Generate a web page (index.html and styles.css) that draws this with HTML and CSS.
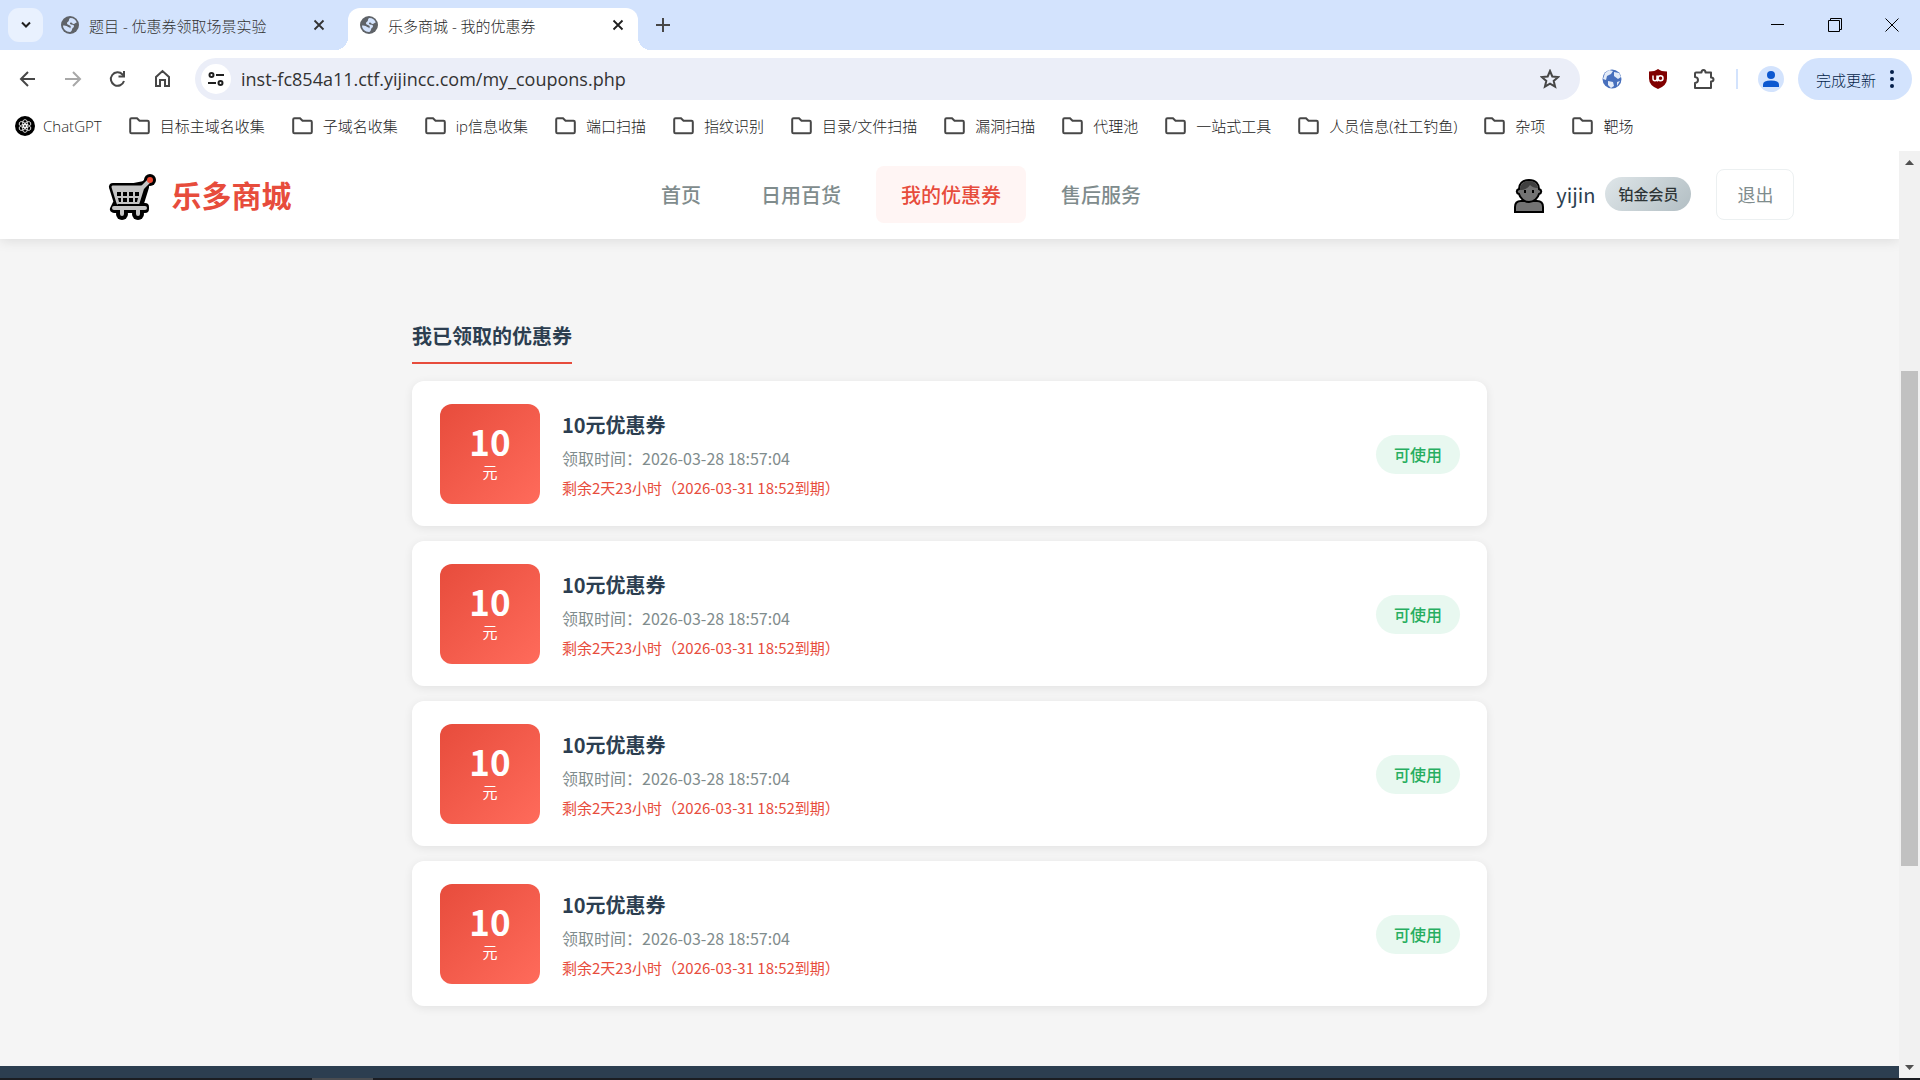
FILE: index.html
```html
<!DOCTYPE html>
<html lang="zh-CN">
<head>
    <meta charset="UTF-8">
    <meta name="viewport" content="width=device-width, initial-scale=1.0">
    <title>乐多商城 - 我的优惠券</title>
    <link rel="stylesheet" href="styles.css">
</head>
<body>

    <!-- Shared icons -->
    <svg class="sprite" aria-hidden="true">
        <symbol id="globe" viewBox="0 0 18 18">
            <circle cx="9" cy="9" r="9" fill="#5f6368"/>
            <path d="M9.500 2c3 0 5.500 2 6.300 4.500-1.300 0-1.800 1.500-3.300 1.500-1.500 0-1-1.500-2.500-1.500S8.500 8 10 8.500c1.500.3 3 0 3 1.800 0 1.700-2 1.500-2 3.200 0 1-1 2.300-2 2.500C5 16 2 13 2 9.500c1.500 0 3.500 0 4.500 1 .7 1 2.500.3 2.500 2 .8-.8 1-2 .3-2.700C8.500 9 6 9 6 7c0-1 2-1.500 2-3 0-1 .5-2 1.500-2z" fill="#d3e3fd"/>
        </symbol>
        <symbol id="close" viewBox="0 0 12 12">
            <path d="M1.500 1.500l9 9M10.500 1.500l-9 9" stroke="currentColor" stroke-width="1.800" fill="none"/>
        </symbol>
        <symbol id="folder" viewBox="0 0 21 18">
            <path d="M1.200 2.500Q1.200 1.200 2.500 1.200H8l2.500 2.600h8q1.300 0 1.300 1.300v9.900q0 1.300-1.300 1.300h-16q-1.300 0-1.300-1.300z" fill="none" stroke="#474747" stroke-width="2"/>
        </symbol>
    </svg>

    <!-- Tab Strip -->
    <div class="tab-strip">
        <button class="tab-search" aria-label="搜索标签页">
            <svg width="10" height="8" viewBox="0 0 10 8"><path d="M1 1.500l4 4 4-4" fill="none" stroke="#1f1f1f" stroke-width="2"/></svg>
        </button>
        <div class="tab">
            <svg class="favicon"><use href="#globe"/></svg>
            <span class="tab-title">题目 - 优惠券领取场景实验</span>
            <button class="tab-close" aria-label="关闭"><svg><use href="#close"/></svg></button>
        </div>
        <div class="tab active">
            <svg class="favicon"><use href="#globe"/></svg>
            <span class="tab-title">乐多商城 - 我的优惠券</span>
            <button class="tab-close" aria-label="关闭"><svg><use href="#close"/></svg></button>
        </div>
        <button class="new-tab" aria-label="打开新的标签页">
            <svg width="14" height="14" viewBox="0 0 14 14"><path d="M7 0v14M0 7h14" stroke="#474747" stroke-width="2"/></svg>
        </button>
        <div class="window-buttons">
            <button aria-label="最小化"><svg width="14" height="14" viewBox="0 0 14 14"><path d="M0 6.500h13" stroke="#000"/></svg></button>
            <button aria-label="还原"><svg width="14" height="14" viewBox="0 0 14 14"><path d="M.5 2.500h11v11H.5zM2.500 2V.5h11v11H12" fill="none" stroke="#000"/></svg></button>
            <button aria-label="关闭窗口"><svg width="14" height="14" viewBox="0 0 14 14"><path d="M.5.5l13 13M13.500.5l-13 13" stroke="#000"/></svg></button>
        </div>
    </div>

    <!-- Toolbar -->
    <div class="toolbar">
        <div class="nav-icons">
            <button aria-label="后退"><svg width="20" height="20" viewBox="0 0 20 20"><path d="M17 10H3.500M10 3l-7 7 7 7" fill="none" stroke="#474747" stroke-width="2"/></svg></button>
            <button aria-label="前进"><svg width="20" height="20" viewBox="0 0 20 20"><path d="M2 10h14.500M10 3l7 7-7 7" fill="none" stroke="#a8a8a8" stroke-width="2"/></svg></button>
            <button aria-label="重新加载"><svg width="20" height="20" viewBox="0 0 20 20"><path d="M16 12A6.700 6.700 0 1 1 14.500 5.500L16 7" fill="none" stroke="#474747" stroke-width="2"/><path d="M17 2v6.500h-6.500v-2H15V2z" fill="#474747"/></svg></button>
            <button aria-label="主页"><svg width="20" height="20" viewBox="0 0 20 20"><path d="M3 17V8l6.500-6L16 8v9h-4v-6H7v6z" fill="none" stroke="#474747" stroke-width="2"/></svg></button>
        </div>
        <div class="address-bar">
            <button class="site-info" aria-label="查看网站信息">
                <svg width="16" height="14" viewBox="0 0 16 14"><g fill="none" stroke="#1f1f1f" stroke-width="2"><circle cx="3.500" cy="3" r="2"/><path d="M8 3h8M0 11h8"/><circle cx="12.500" cy="11" r="2"/></g></svg>
            </button>
            <input class="url" type="text" aria-label="地址" value="inst-fc854a11.ctf.yijincc.com/my_coupons.php">
            <button class="star" aria-label="添加书签">
                <svg width="20" height="20" viewBox="0 0 20 20"><path d="M10 2l2.300 5.500 6 .5-4.600 3.900 1.400 5.800L10 14.600l-5.100 3.100 1.400-5.800L1.700 8l6-.5z" fill="none" stroke="#474747" stroke-width="2"/></svg>
            </button>
        </div>
        <div class="extensions">
            <button aria-label="代理扩展">
                <svg width="20" height="20" viewBox="0 0 20 20"><circle cx="10" cy="10" r="9.500" fill="#4870bd"/><path d="M3 4l4-3 4 1-2 3-4 2-1 4-3-1zM12 3l5 1 2 4-3 2-4-3zM6 12l5 1 1 4-3 2-3-3zM15 13l3-1-3 5z" fill="#e3ebf8"/></svg>
            </button>
            <button aria-label="uBlock Origin">
                <svg width="20" height="20" viewBox="0 0 20 20"><path d="M10 0q3 2.500 9 2.500v7q0 7-9 10.500-9-3.500-9-10.500v-7Q7 2.500 10 0z" fill="#800000"/><path d="M5 6.500v3.200q0 2 2 2t2-2V6.500M9.500 6.500v6" fill="none" stroke="#fff" stroke-width="1.500"/><circle cx="12.500" cy="9.200" r="2.500" fill="none" stroke="#fff" stroke-width="1.500"/></svg>
            </button>
            <button aria-label="扩展程序">
                <svg width="22" height="22" viewBox="0 0 22 22"><path d="M3 4.500h5.500q0-2.500 2-2.500t2 2.500H18v5q2.500 0 2.500 2t-2.500 2V20H2v-5q3-.3 3-3t-3-3V5.500q0-1 1-1z" fill="none" stroke="#474747" stroke-width="2" stroke-linejoin="round"/></svg>
            </button>
        </div>
        <span class="divider"></span>
        <button class="profile" aria-label="个人资料">
            <svg width="16" height="16" viewBox="0 0 16 16" fill="#0b57d0"><circle cx="8" cy="4" r="4"/><path d="M0 16v-2.500q0-4 8-4t8 4V16z"/></svg>
        </button>
        <button class="update">
            <span>完成更新</span>
            <svg width="4" height="18" viewBox="0 0 4 18" fill="#041e49"><circle cx="2" cy="2" r="2"/><circle cx="2" cy="9" r="2"/><circle cx="2" cy="16" r="2"/></svg>
        </button>
    </div>

    <!-- Bookmarks -->
    <div class="bookmarks">
        <a href="#" class="chatgpt"><svg viewBox="0 0 20 20"><circle cx="10" cy="10" r="10" fill="#000"/><g fill="none" stroke="#fff" stroke-width=".8"><ellipse cx="10" cy="7.500" rx="2.500" ry="4"/><ellipse cx="10" cy="7.500" rx="2.500" ry="4" transform="rotate(60 10 10)"/><ellipse cx="10" cy="7.500" rx="2.500" ry="4" transform="rotate(120 10 10)"/><ellipse cx="10" cy="7.500" rx="2.500" ry="4" transform="rotate(180 10 10)"/><ellipse cx="10" cy="7.500" rx="2.500" ry="4" transform="rotate(240 10 10)"/><ellipse cx="10" cy="7.500" rx="2.500" ry="4" transform="rotate(300 10 10)"/></g></svg>ChatGPT</a>
        <a href="#"><svg><use href="#folder"/></svg>目标主域名收集</a>
        <a href="#"><svg><use href="#folder"/></svg>子域名收集</a>
        <a href="#"><svg><use href="#folder"/></svg>ip信息收集</a>
        <a href="#"><svg><use href="#folder"/></svg>端口扫描</a>
        <a href="#"><svg><use href="#folder"/></svg>指纹识别</a>
        <a href="#"><svg><use href="#folder"/></svg>目录/文件扫描</a>
        <a href="#"><svg><use href="#folder"/></svg>漏洞扫描</a>
        <a href="#"><svg><use href="#folder"/></svg>代理池</a>
        <a href="#"><svg><use href="#folder"/></svg>一站式工具</a>
        <a href="#"><svg><use href="#folder"/></svg>人员信息(社工钓鱼)</a>
        <a href="#"><svg><use href="#folder"/></svg>杂项</a>
        <a href="#"><svg><use href="#folder"/></svg>靶场</a>
    </div>

    <!-- Page -->
    <div class="viewport">
        <div class="page">
            <header class="site-header">
                <div class="header-inner">
                    <a class="logo" href="#">
                        <svg width="48" height="48" viewBox="0 0 48 48">
                            <!-- black outline -->
                            <g fill="none" stroke="#000" stroke-width="8" stroke-linecap="round" stroke-linejoin="round">
                                <path d="M5 14h30l6-7M5 14l5 16h22l5-16M9 30l-3 6h31v-2" fill="#000"/>
                                <path d="M14 37v4M30 37v4"/>
                            </g>
                            <circle cx="42" cy="7" r="6" fill="#000"/>
                            <circle cx="14" cy="41" r="6" fill="#000"/>
                            <circle cx="30" cy="41" r="6" fill="#000"/>
                            <!-- grey frame -->
                            <g fill="none" stroke="#c4c4c4" stroke-width="3" stroke-linecap="round" stroke-linejoin="round">
                                <path d="M5 14h30l-5 16H10z" fill="#c4c4c4"/>
                                <path d="M35 14l6-6M6 35h31M14 36v5M30 36v5" stroke-width="4"/>
                            </g>
                            <path d="M10 32h22" stroke="#000" stroke-width="2"/>
                            <path d="M9 19h4v4H9zM15 19h4v4h-4zM21 19h4v4h-4zM27 19h4v4h-4zM10 25h3v4h-2zM15 25h4v4h-4zM21 25h4v4h-4zM27 25h3l-1 4h-2z" fill="#000"/>
                            <circle cx="42" cy="7" r="3" fill="#ee4b35"/>
                        </svg>
                        <span>乐多商城</span>
                    </a>
                    <nav class="site-nav">
                        <a href="#">首页</a>
                        <a href="#">日用百货</a>
                        <a href="#" class="active">我的优惠券</a>
                        <a href="#">售后服务</a>
                    </nav>
                    <div class="user">
                        <svg class="avatar" width="30" height="34" viewBox="0 0 30 34">
                            <path d="M1 33v-5q0-6 6-6h16q6 0 6 6v5z" fill="#737373" stroke="#000" stroke-width="2"/>
                            <path d="M15 1C8 1 5 5 5 10c-3 1-3 4 0 5 1 4 5 8 10 8s9-4 10-8c3-1 3-4 0-5 0-5-3-9-10-9z" fill="#737373" stroke="#000" stroke-width="2"/>
                            <path d="M6 11c0-6 4-9 9-9s8 3 9 7c-4 0-6-1-8-3-2 3-5 5-10 5z" fill="#404040"/>
                            <path d="M11 11v3M19 11v3" stroke="#000" stroke-width="2"/>
                        </svg>
                        <span class="user-name">yijin</span>
                        <span class="level">铂金会员</span>
                        <button class="logout">退出</button>
                    </div>
                </div>
            </header>

            <main class="container">
                <h2 class="section-title">我已领取的优惠券</h2>
                <div class="coupon-list">
                    <div class="coupon">
                        <div class="amount"><strong>10</strong><span>元</span></div>
                        <div class="info">
                            <h3>10元优惠券</h3>
                            <p class="time">领取时间：2026-03-28 18:57:04</p>
                            <p class="expire">剩余2天23小时（2026-03-31 18:52到期）</p>
                        </div>
                        <span class="status">可使用</span>
                    </div>
                    <div class="coupon">
                        <div class="amount"><strong>10</strong><span>元</span></div>
                        <div class="info">
                            <h3>10元优惠券</h3>
                            <p class="time">领取时间：2026-03-28 18:57:04</p>
                            <p class="expire">剩余2天23小时（2026-03-31 18:52到期）</p>
                        </div>
                        <span class="status">可使用</span>
                    </div>
                    <div class="coupon">
                        <div class="amount"><strong>10</strong><span>元</span></div>
                        <div class="info">
                            <h3>10元优惠券</h3>
                            <p class="time">领取时间：2026-03-28 18:57:04</p>
                            <p class="expire">剩余2天23小时（2026-03-31 18:52到期）</p>
                        </div>
                        <span class="status">可使用</span>
                    </div>
                    <div class="coupon">
                        <div class="amount"><strong>10</strong><span>元</span></div>
                        <div class="info">
                            <h3>10元优惠券</h3>
                            <p class="time">领取时间：2026-03-28 18:57:04</p>
                            <p class="expire">剩余2天23小时（2026-03-31 18:52到期）</p>
                        </div>
                        <span class="status">可使用</span>
                    </div>
                </div>
            </main>
            <footer class="site-footer"></footer>
        </div>

        <div class="scrollbar">
            <svg width="9" height="5" viewBox="0 0 9 5"><path d="M0 5l4.500-5L9 5z" fill="#505050"/></svg>
            <div class="track"><div class="thumb"></div></div>
            <svg width="9" height="5" viewBox="0 0 9 5"><path d="M0 0l4.500 5L9 0z" fill="#505050"/></svg>
        </div>
    </div>
    <div class="taskbar"><span></span></div>

</body>
</html>
```
FILE: styles.css
```css
/* Basic Reset */
* {
    margin: 0;
    padding: 0;
    box-sizing: border-box;
}
body {
    font-family: "Noto Sans CJK SC", sans-serif;
    background: #fff;
    color: #2c3e50;
    display: flex;
    flex-direction: column;
    height: 100vh;
    overflow: hidden;
}
button {
    font-family: inherit;
    background: none;
    border: none;
    cursor: pointer;
    display: flex;
    align-items: center;
    justify-content: center;
}
a {
    color: inherit;
    text-decoration: none;
}
.sprite {
    display: none;
}

/* Tab Strip */
.tab-strip {
    background: #d3e3fd;
    display: flex;
    align-items: center;
    height: 50px;
    padding-left: 8px;
    flex-shrink: 0;
}
.tab-search {
    width: 35px;
    height: 34px;
    border-radius: 11px;
    background: #e9f1fe;
}
.tab {
    position: relative;
    display: flex;
    align-items: center;
    gap: 10px;
    width: 290px;
    height: 42px;
    margin-top: 8px;
    padding: 0 14px 8px 12px;
    font-family: "Open Sans", "Noto Sans CJK SC", sans-serif;
    font-size: 15px;
    font-weight: 300;
    color: #333;
}
.tab-search + .tab {
    margin-left: 6px;
    margin-right: 9px;
}
.tab.active {
    background: #fff;
    color: #1f1f1f;
    border-radius: 12px 12px 0 0;
}
.tab.active::before,
.tab.active::after {
    content: "";
    position: absolute;
    bottom: 0;
    width: 13px;
    height: 13px;
}
.tab.active::before {
    left: -13px;
    background: radial-gradient(circle at 0 0, #d3e3fd 13px, #fff 13px);
}
.tab.active::after {
    right: -13px;
    background: radial-gradient(circle at 100% 0, #d3e3fd 13px, #fff 13px);
}
.favicon {
    width: 18px;
    height: 18px;
}
.tab-title {
    flex: 1;
    white-space: nowrap;
}
.tab-close {
    width: 12px;
    height: 12px;
    color: inherit;
}
.tab-close svg {
    width: 12px;
    height: 12px;
}
.new-tab {
    width: 34px;
    height: 34px;
    margin-left: 8px;
}
.window-buttons {
    display: flex;
    margin-left: auto;
}
.window-buttons button {
    width: 57px;
    height: 50px;
}

/* Toolbar */
.toolbar {
    display: flex;
    align-items: center;
    height: 58px;
    padding: 0 8px;
    flex-shrink: 0;
}
.nav-icons {
    display: flex;
    gap: 5px;
    margin-right: 12px;
}
.nav-icons button {
    width: 40px;
    height: 40px;
}
.address-bar {
    flex: 1;
    display: flex;
    align-items: center;
    height: 42px;
    padding: 0 20px 0 6px;
    background: #ebeef8;
    border-radius: 21px;
}
.site-info {
    width: 30px;
    height: 30px;
    border-radius: 50%;
    background: #fff;
}
.url {
    flex: 1;
    margin-left: 10px;
    border: none;
    outline: none;
    background: none;
    font-family: "Open Sans", sans-serif;
    font-size: 18px;
    color: #333;
}
.extensions {
    display: flex;
    gap: 6px;
    margin-left: 12px;
}
.extensions button {
    width: 40px;
    height: 40px;
}
.divider {
    width: 2px;
    height: 20px;
    margin: 0 20px 0 12px;
    background: #d3e3fd;
}
.profile {
    width: 26px;
    height: 26px;
    border-radius: 50%;
    background: #d3e3fd;
}
.update {
    gap: 14px;
    height: 42px;
    margin-left: 14px;
    padding: 0 18px;
    border-radius: 21px;
    background: #d3e3fd;
    font-size: 15px;
    font-weight: 300;
    color: #041e49;
}

/* Bookmarks */
.bookmarks {
    display: flex;
    align-items: center;
    gap: 27px;
    height: 43px;
    padding: 0 15px 8px;
    flex-shrink: 0;
    font-family: "Open Sans", "Noto Sans CJK SC", sans-serif;
    font-size: 15px;
    font-weight: 300;
    color: #222;
}
.bookmarks a {
    display: flex;
    align-items: center;
    gap: 10px;
    white-space: nowrap;
}
.bookmarks svg {
    width: 21px;
    height: 18px;
}
.bookmarks .chatgpt {
    gap: 8px;
}
.bookmarks .chatgpt svg {
    width: 20px;
    height: 20px;
}

/* Page area */
.viewport {
    flex: 1;
    min-height: 0;
    display: flex;
}
.page {
    flex: 1;
    display: flex;
    flex-direction: column;
    background: #f5f5f5;
    overflow: hidden;
}

/* Header */
.site-header {
    background: #fff;
    box-shadow: 0 2px 12px rgba(0, 0, 0, 0.1);
}
.header-inner {
    display: flex;
    align-items: center;
    justify-content: space-between;
    max-width: 1752px;
    height: 88px;
    margin: 0 auto;
    padding: 0 31px 2px 32px;
}
.logo {
    display: flex;
    align-items: center;
    gap: 16px;
    padding-left: 2px;
    font-size: 30px;
    font-weight: 700;
    color: #e74c3c;
}
.logo svg {
    margin-top: 6px;
}
.site-nav {
    display: flex;
    gap: 10px;
}
.site-nav a {
    padding: 14px 25px;
    border-radius: 8px;
    font-size: 20px;
    line-height: 29px;
    font-weight: 500;
    color: #7f8c8d;
}
.site-nav a.active {
    background: #fff5f4;
    color: #e74c3c;
}
.user {
    display: flex;
    align-items: center;
    padding-left: 4px;
}
.avatar {
    margin-top: 4px;
}
.user-name {
    margin: 0 10px 0 12px;
    font-size: 20px;
    color: #2c3e50;
}
.level {
    padding: 5px 13px;
    border-radius: 17px;
    background: linear-gradient(135deg, #dfe6e9, #b2bec3);
    font-size: 15px;
    line-height: 24px;
    font-weight: 500;
    color: #2d3436;
}
.logout {
    height: 51px;
    margin-left: 25px;
    padding: 0 20px;
    border: 1px solid #ecf0f1;
    border-radius: 8px;
    font-size: 18px;
    color: #7f8c8d;
}

/* Coupons */
.container {
    flex: 1;
    width: 100%;
    max-width: 1125px;
    margin: 0 auto;
    padding: 80px 25px 60px;
}
.section-title {
    display: inline-block;
    padding-bottom: 10px;
    border-bottom: 2px solid #e74c3c;
    font-size: 20px;
    line-height: 33px;
    font-weight: 600;
}
.coupon-list {
    display: flex;
    flex-direction: column;
    gap: 15px;
    margin-top: 17px;
}
.coupon {
    display: flex;
    align-items: center;
    gap: 22px;
    padding: 23px 27px 22px 28px;
    background: #fff;
    border-radius: 12px;
    box-shadow: 0 2px 10px rgba(0, 0, 0, 0.08);
}
.amount {
    display: flex;
    flex-direction: column;
    align-items: center;
    justify-content: center;
    width: 100px;
    height: 100px;
    border-radius: 12px;
    background: linear-gradient(135deg, #e74c3c, #ff6b5b);
    color: #fff;
}
.amount strong {
    font-size: 35px;
    line-height: 36px;
}
.amount span {
    font-size: 15px;
    line-height: 26px;
}
.info {
    flex: 1;
}
.info h3 {
    font-size: 20px;
    line-height: 32px;
    font-weight: 600;
    margin-bottom: 4px;
}
.time {
    font-size: 16px;
    line-height: 26px;
    margin-bottom: 4px;
    color: #7f8c8d;
}
.expire {
    font-size: 15px;
    line-height: 25px;
    color: #e74c3c;
}
.status {
    padding: 7px 18px;
    border-radius: 20px;
    background: #e8f8f0;
    font-size: 16px;
    line-height: 25px;
    font-weight: 500;
    color: #27ae60;
}
.site-footer {
    height: 12px;
    background: #2c3e50;
}

/* Scrollbar */
.scrollbar {
    display: flex;
    flex-direction: column;
    align-items: center;
    gap: 8px;
    width: 21px;
    padding: 9px 0 8px;
    background: #f1f1f1;
}
.track {
    flex: 1;
    width: 17px;
}
.thumb {
    height: 56%;
    margin-top: 198px;
    background: #c1c1c1;
}

/* Taskbar edge */
.taskbar {
    height: 2px;
    padding-left: 312px;
    background: #1b1d22;
}
.taskbar span {
    display: block;
    width: 61px;
    height: 2px;
    background: #4a4c50;
}
```
